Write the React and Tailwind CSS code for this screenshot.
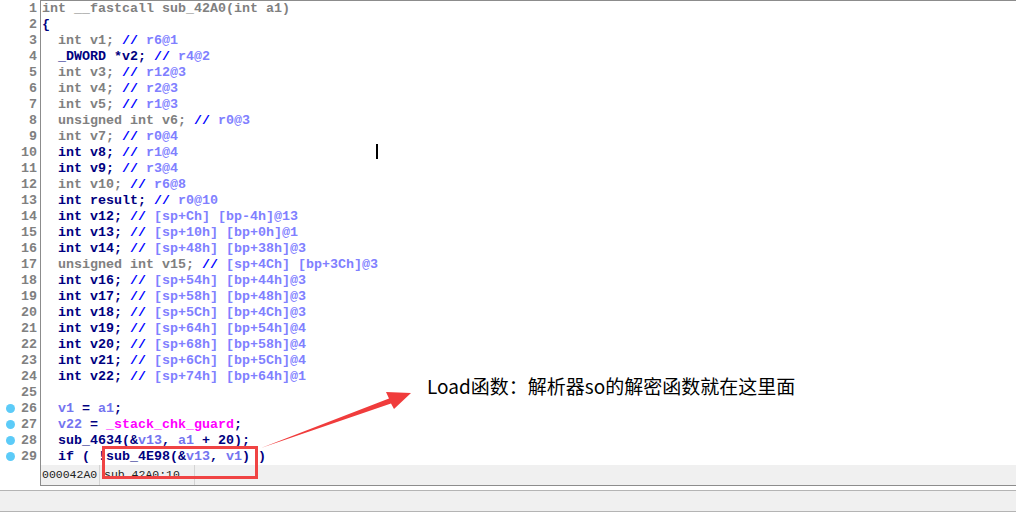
import React from "react";

const G = "text-[#808080]";
const N = "text-[#000080]";
const B = "text-[#0000ff]";
const C = "text-[#8080ff]";
const P = "text-[#7474f0]";
const M = "text-[#ff00ff]";

const decl = (color, text, comment) => [
  [color, "  " + text + " "],
  [B, "//"],
  [color, " "],
  [C, comment],
];

const lines = [
  [[G, "int __fastcall sub_42A0(int a1)"]],
  [[N, "{"]],
  decl(G, "int v1;", "r6@1"),
  decl(N, "_DWORD *v2;", "r4@2"),
  decl(G, "int v3;", "r12@3"),
  decl(G, "int v4;", "r2@3"),
  decl(G, "int v5;", "r1@3"),
  decl(G, "unsigned int v6;", "r0@3"),
  decl(G, "int v7;", "r0@4"),
  decl(N, "int v8;", "r1@4"),
  decl(N, "int v9;", "r3@4"),
  decl(G, "int v10;", "r6@8"),
  decl(N, "int result;", "r0@10"),
  decl(N, "int v12;", "[sp+Ch] [bp-4h]@13"),
  decl(N, "int v13;", "[sp+10h] [bp+0h]@1"),
  decl(N, "int v14;", "[sp+48h] [bp+38h]@3"),
  decl(G, "unsigned int v15;", "[sp+4Ch] [bp+3Ch]@3"),
  decl(N, "int v16;", "[sp+54h] [bp+44h]@3"),
  decl(N, "int v17;", "[sp+58h] [bp+48h]@3"),
  decl(N, "int v18;", "[sp+5Ch] [bp+4Ch]@3"),
  decl(N, "int v19;", "[sp+64h] [bp+54h]@4"),
  decl(N, "int v20;", "[sp+68h] [bp+58h]@4"),
  decl(N, "int v21;", "[sp+6Ch] [bp+5Ch]@4"),
  decl(N, "int v22;", "[sp+74h] [bp+64h]@1"),
  [],
  [[N, "  "], [P, "v1"], [N, " = "], [P, "a1"], [N, ";"]],
  [[N, "  "], [P, "v22"], [N, " = "], [M, "_stack_chk_guard"], [N, ";"]],
  [[N, "  sub_4634(&"], [P, "v13"], [N, ", "], [P, "a1"], [N, " + 20);"]],
  [[N, "  if ( !sub_4E98(&"], [P, "v13"], [N, ", "], [P, "v1"], [N, ") )"]],
];

const mono = { fontFamily: '"Liberation Mono", "DejaVu Sans Mono", monospace' };

export default function App() {
  return (
    <div
      className="relative w-[1016px] h-[512px] bg-white overflow-hidden"
      style={mono}
    >
      <div className="flex h-[486px]">
        {/* gutter */}
        <div className="w-[40px] pt-[1px] flex flex-col">
          {lines.map((_, i) => (
            <div
              key={i}
              className="h-[16px] flex items-center justify-end pr-[3px] relative text-[13.33px] font-bold text-[#808080] leading-[16px]"
            >
              {i >= 25 && (
                <span className="absolute left-[6px] top-[3px] w-[9px] h-[9px] rounded-full bg-[#5ccbf8]" />
              )}
              {i + 1}
            </div>
          ))}
        </div>
        {/* code panel */}
        <div className="flex-1 flex flex-col border-l border-t border-b border-[#8c8c8c]">
          <div className="flex-1 pl-[1px]">
            {lines.map((toks, i) => (
              <div
                key={i}
                className="h-[16px] leading-[16px] text-[13.33px] font-bold whitespace-pre"
              >
                {toks.map(([c, t], j) => (
                  <span key={j} className={c}>
                    {t}
                  </span>
                ))}
              </div>
            ))}
          </div>
          <div className="h-[20px] bg-[#f0f0f0] flex items-center text-[11.5px] text-[#202020] whitespace-pre">
            <div className="w-[59px] h-full flex items-center pl-[1px] border-r border-[#d4d4d4]">
              000042A0
            </div>
            <div className="w-[95px] h-full flex items-center pl-[4px] border-r border-[#d4d4d4]">
              sub_42A0:10
            </div>
          </div>
        </div>
      </div>
      {/* bottom bars */}
      <div className="h-[4px] bg-white" />
      <div className="h-[22px] bg-[#f0f0f0] border-t border-b border-[#b4b4b4]" />

      {/* annotation text */}
      <div
        className="absolute left-[427px] top-[373px] text-[19px] leading-[26px] text-black whitespace-nowrap"
        style={{ fontFamily: '"Noto Sans CJK SC", "Noto Sans", sans-serif' }}
      >
        Load函数：解析器so的解密函数就在这里面
      </div>

      {/* red box */}
      <div className="absolute left-[102px] top-[446px] w-[156px] h-[33px] border-[3px] border-[#f04444]" />

      {/* arrow */}
      <svg
        className="absolute left-0 top-0"
        width="1016"
        height="512"
        viewBox="0 0 1016 512"
      >
        <polygon
          points="261,448 389,398.5 386,392 411,393 394,409 391,403.5"
          fill="#f03c3c"
        />
      </svg>

      {/* mouse cursor */}
      <div className="absolute left-[376px] top-[144px] w-[2px] h-[15px] bg-black" />
    </div>
  );
}
